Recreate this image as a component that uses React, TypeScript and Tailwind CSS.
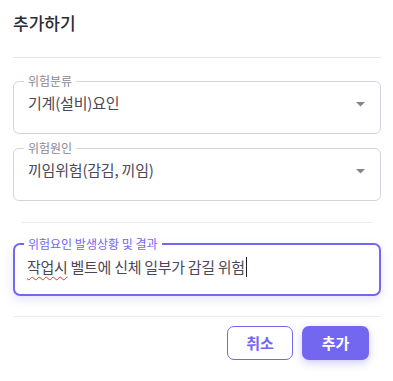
import React from "react";

const font = { fontFamily: '"Noto Sans CJK KR", Inter, sans-serif' };

function Arrow() {
  return (
    <svg width="9" height="5" viewBox="0 0 9 5" className="shrink-0 mt-[2px]">
      <path d="M0 0 L9 0 L4.5 4.5 Z" fill="#85838f" />
    </svg>
  );
}

function SelectField({ label, value }: { label: string; value: string }) {
  return (
    <fieldset className="border border-[#d5d4da] rounded-[6px] pl-[10px] pr-[15px] pt-[3px] pb-[19px]">
      <legend className="px-[4px] text-[12px] leading-[16px] text-[#8a8794]">{label}</legend>
      <div className="flex items-center justify-between pl-[4px]">
        <span className="text-[15px] leading-[22px] tracking-[-0.2px] text-[#4b4757]">{value}</span>
        <Arrow />
      </div>
    </fieldset>
  );
}

export default function App() {
  return (
    <div className="w-[393px] h-[381px] bg-white" style={font}>
      <div className="pl-[13px] pr-[12px] pt-[10px]">
        <h2 className="text-[17px] leading-[26px] font-medium text-[#2b2b33]">추가하기</h2>
        <div className="mt-[21px] h-px bg-[#e6e6ea]" />
        <div className="mt-[15px] flex flex-col gap-[6px]">
          <SelectField label="위험분류" value="기계(설비)요인" />
          <SelectField label="위험원인" value="끼임위험(감김, 끼임)" />
        </div>
        <div className="mx-[8px] mt-[21px] h-px bg-[#ececef]" />
        <fieldset className="mt-[13px] border-2 border-[#7367f0] rounded-[7px] pl-[9px] pr-[14px] pt-[4px] pb-[16px] shadow-[0_4px_10px_rgba(115,103,240,0.18)]">
          <legend className="px-[4px] text-[12px] leading-[16px] text-[#7367f0]">위험요인 발생상황 및 결과</legend>
          <div className="pl-[3px] text-[15px] leading-[22px] tracking-[-0.3px] text-[#4b4757] flex items-center">
            <span className="underline decoration-wavy decoration-[#e53935] decoration-1 underline-offset-[3px]">작업시</span>
            <span>&nbsp;벨트에 신체 일부가 감길 위험</span>
            <span className="inline-block w-px h-[20px] bg-[#222] ml-px" />
          </div>
        </fieldset>
        <div className="mt-[20px] h-px bg-[#ececef]" />
        <div className="mt-[9px] flex justify-end gap-[9px] pr-[12px]">
          <button className="w-[66px] h-[34px] rounded-[7px] border border-[#7367f0] bg-white text-[15px] font-semibold text-[#7367f0]">
            취소
          </button>
          <button className="w-[67px] h-[34px] rounded-[7px] bg-[#7367f0] text-[15px] font-semibold text-white shadow-[0_3px_8px_rgba(115,103,240,0.35)]">
            추가
          </button>
        </div>
      </div>
    </div>
  );
}
